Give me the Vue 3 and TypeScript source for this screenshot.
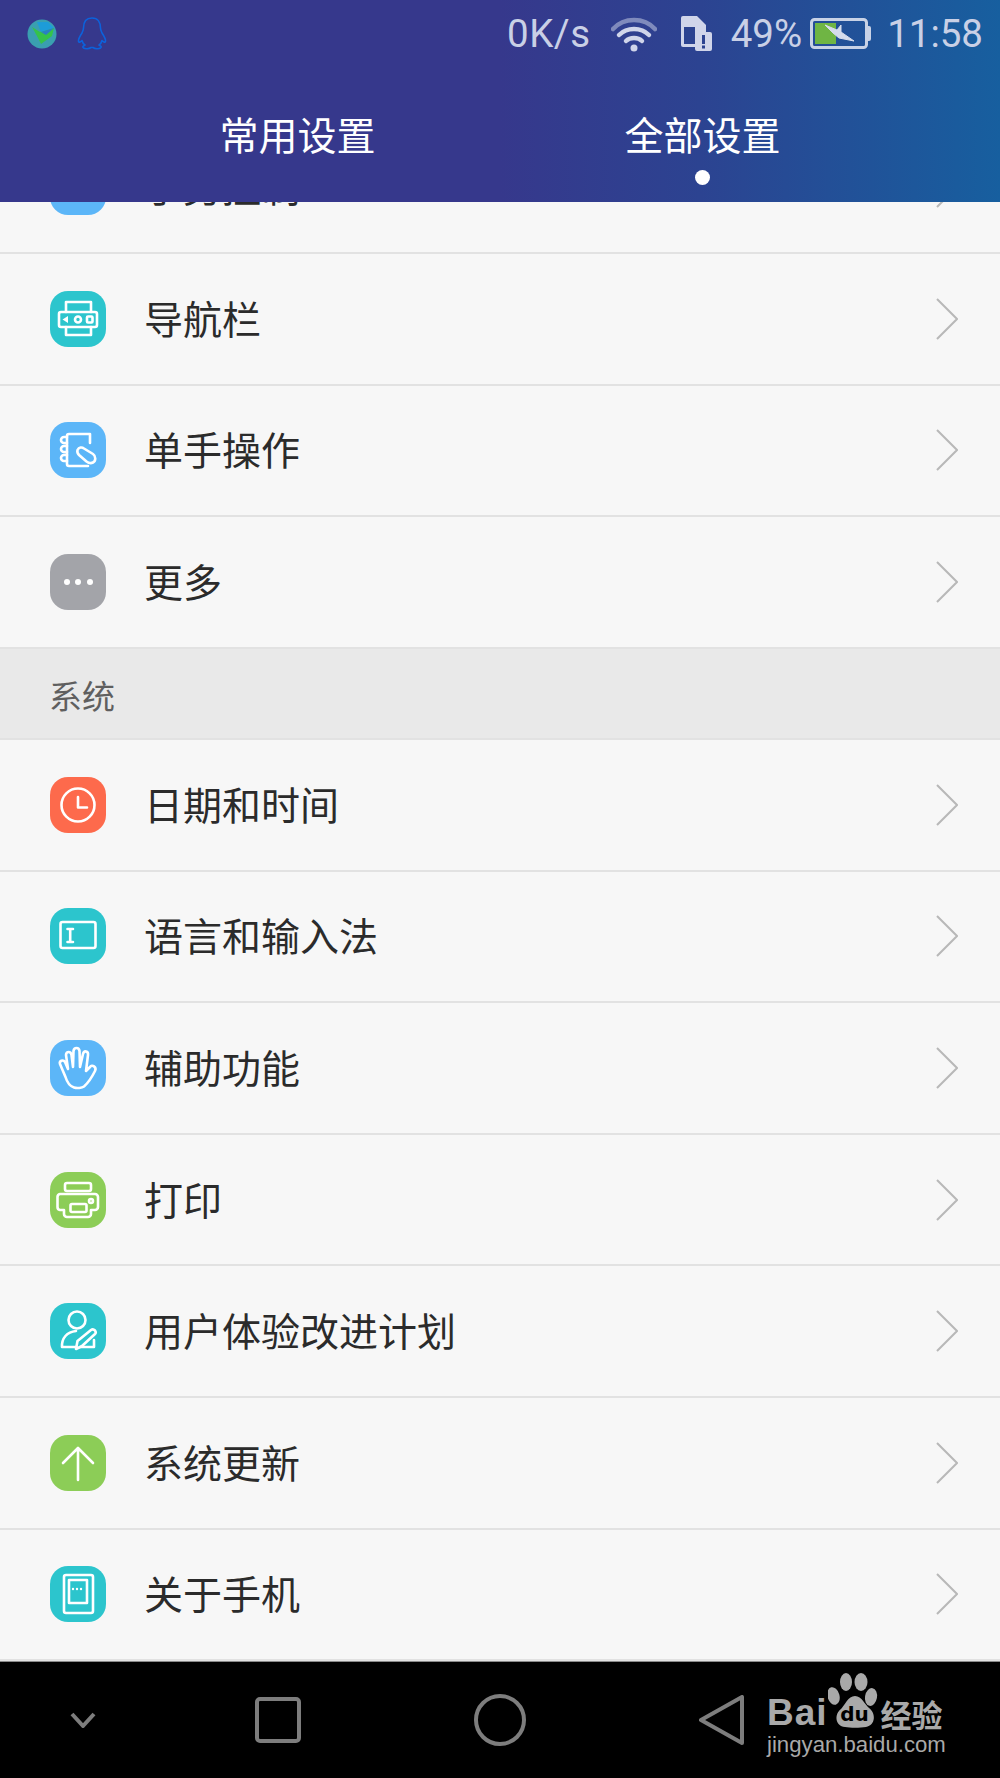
<template>
  <div class="page">
    <header class="top">
      <div class="status">
        <div class="status-left">
          <svg class="globe" width="30" height="30" viewBox="0 0 30 30">
            <circle cx="15" cy="15" r="14.5" fill="#3a9fb0" />
            <path d="M5 8 L13 13 L27 9 L25 17 L14 25 L10 17 Z" fill="#35c24a" />
            <path d="M10 3 L21 3 L27 9 L14 13 Z" fill="#1d9cd8" />
            <path d="M14 13 L27 9 L19 16 Z" fill="#2a7fc4" />
          </svg>
          <svg class="qq" width="30" height="33" viewBox="0 0 30 33" fill="none" stroke="#0c62dc" stroke-width="1.6" stroke-linejoin="round">
            <path d="M15 1 C9 1 6.500 5.500 6.500 11 C6.500 13 6 14 5 16 C3 19 1 22.500 1.500 24.500 C2 26 4 24.500 5 23.500 C5.500 25.500 6.500 27 8 28 C6 29 5 30 6.500 31 C8 32 12 32 14 30.500 C14.500 30.500 15.500 30.500 16 30.500 C18 32 22 32 23.500 31 C25 30 24 29 22 28 C23.500 27 24.500 25.500 25 23.500 C26 24.500 28 26 28.500 24.500 C29 22.500 27 19 25 16 C24 14 23.500 13 23.500 11 C23.500 5.500 21 1 15 1 Z" />
          </svg>
        </div>
        <div class="status-right">
          <span class="speed">0K/s</span>
          <svg class="wifi" width="46" height="36" viewBox="0 0 46 36" fill="none" stroke="#d0d5ea" stroke-width="4.500" stroke-linecap="round">
            <path d="M2 13 C13 1 33 1 44 13" opacity="0.5" />
            <path d="M8 19 C16 11 30 11 38 19" />
            <path d="M15 25 C19 21 27 21 31 25" />
            <circle cx="23" cy="32" r="3.500" fill="#d0d5ea" stroke="none" />
          </svg>
          <svg class="sim" width="32" height="36" viewBox="0 0 32 36">
            <path d="M3 0 H17 L26 9 V31 H3 Q1 31 1 29 V2 Q1 0 3 0 Z" fill="#d0d5ea" />
            <rect x="4" y="11" width="11" height="17" fill="#2c4391" />
            <rect x="15" y="16" width="17" height="19" rx="2" fill="#d0d5ea" />
            <rect x="22" y="19" width="3" height="9" fill="#2c4391" />
            <rect x="22" y="29.500" width="3" height="3" fill="#2c4391" />
          </svg>
          <span class="pct">49%</span>
          <svg class="batt" width="61" height="31" viewBox="0 0 61 31">
            <rect x="1.500" y="1.500" width="55" height="28" rx="3" fill="none" stroke="#c8d2e6" stroke-width="3" />
            <rect x="5" y="5" width="21" height="21" fill="#6fb544" />
            <path d="M58 8 H59 Q61 8 61 10 V21 Q61 23 59 23 H58 Z" fill="#c8d2e6" />
            <path d="M15 7 L27 12 L31 7 L31 14 L44 23 L29 20 L23 15 Z" fill="#d5dcec" stroke="#d5dcec" stroke-width="1" stroke-linejoin="round" />
          </svg>
          <span class="clock">11:58</span>
        </div>
      </div>
      <nav class="tabs">
        <div class="tab">常用设置</div>
        <div class="tab is-active">全部设置</div>
      </nav>
    </header>

    <main class="list">
      <template v-for="item in items" :key="item.label">
        <div v-if="item.section" class="section">{{ item.label }}</div>
        <div v-else class="row" :class="{ 'is-scrolled': item.scrolled }">
          <span class="ico" :style="{ background: item.color }">
            <svg
              width="56"
              height="56"
              viewBox="0 0 56 56"
              fill="none"
              stroke="#fff"
              stroke-width="2.600"
              stroke-linecap="round"
              stroke-linejoin="round"
              v-html="item.icon"
            ></svg>
          </span>
          <span class="label">{{ item.label }}</span>
          <svg class="chevron" width="22" height="42" viewBox="0 0 22 42" fill="none" stroke="#b8b8b8" stroke-width="2">
            <path d="M1 1 L21 21 L1 41" />
          </svg>
        </div>
      </template>
    </main>

    <footer class="nav">
      <svg class="nav-ico" width="26" height="16" viewBox="0 0 26 16" fill="none" stroke="#7d7d7d" stroke-width="4" stroke-linejoin="round">
        <path d="M2 2 L13 14 L24 2" />
      </svg>
      <svg class="nav-ico" width="46" height="46" viewBox="0 0 46 46" fill="none" stroke="#7d7d7d" stroke-width="4">
        <rect x="2" y="2" width="42" height="42" rx="3" />
      </svg>
      <svg class="nav-ico" width="52" height="52" viewBox="0 0 52 52" fill="none" stroke="#7d7d7d" stroke-width="4">
        <circle cx="26" cy="26" r="24" />
      </svg>
      <svg class="nav-ico" width="46" height="50" viewBox="0 0 46 50" fill="none" stroke="#7d7d7d" stroke-width="4" stroke-linejoin="round">
        <path d="M43 2 V48 L2 25 Z" />
      </svg>

      <div class="mark">
        <div class="mark-top">
          <span class="mark-bai">Bai</span>
          <svg class="paw" width="55" height="60" viewBox="70 5 55 60">
            <ellipse cx="88" cy="17" rx="6" ry="9" fill="#a9a9a9" />
            <ellipse cx="103" cy="17" rx="6.500" ry="9" fill="#a9a9a9" />
            <ellipse cx="75.500" cy="31" rx="6" ry="9" fill="#a9a9a9" transform="rotate(-15 75.500 31)" />
            <ellipse cx="113" cy="32" rx="6" ry="9" fill="#a9a9a9" transform="rotate(10 113 32)" />
            <path d="M97 31 C90 31 87 40 83 44 C76 49 77 61 87 62 C92 63 102 63 108 62 C118 60 118 48 111 43 C107 40 104 31 97 31 Z" fill="#a9a9a9" />
            <text class="paw-du" x="96.500" y="56">du</text>
          </svg>
          <span class="mark-cn">经验</span>
        </div>
        <div class="mark-url">jingyan.baidu.com</div>
      </div>
    </footer>
  </div>
</template>

<script setup lang="ts">
interface Item {
  label: string
  color?: string
  icon?: string
  section?: boolean
  scrolled?: boolean
}

const TEAL = '#2cc5cd'
const BLUE = '#5cb6f8'
const GREEN = '#8ccd57'

const items: Item[] = [
  {
    label: '手势控制',
    color: BLUE,
    scrolled: true,
    icon: '<circle cx="28" cy="26" r="6" fill="#fff" stroke="none"/>'
  },
  {
    label: '导航栏',
    color: TEAL,
    icon:
      '<path d="M16 21 V11 H41 V21 M16 36 V44 H41 V36"/><rect x="9" y="21" width="38" height="15" rx="2"/>' +
      '<path d="M18 25 V32 L12.500 28.500 Z" fill="#fff" stroke="none"/><circle cx="28" cy="28.500" r="3"/><rect x="37" y="25.500" width="5.500" height="6" rx="1"/>'
  },
  {
    label: '单手操作',
    color: BLUE,
    icon:
      '<path d="M40 21 V12 H19 Q17 12 17 14 V42 Q17 44 19 44 H38"/>' +
      '<path d="M17 15 H14 A3 3 0 0 0 14 21 H17 M17 24 H14 A3 3 0 0 0 14 30 H17 M17 33 H14 A3 3 0 0 0 14 39 H17"/>' +
      '<path d="M27.500 28 C29 25 32 25 34 26.500 L43 32 C46 34 46 39 43 40.500 C41 41.500 38.500 41 36.500 39.500 L29 33 C27.500 31.500 27 30 27.500 28 Z"/>'
  },
  {
    label: '更多',
    color: '#a3a4a9',
    icon:
      '<circle cx="17" cy="28" r="3" fill="#fff" stroke="none"/><circle cx="28" cy="28" r="3" fill="#fff" stroke="none"/><circle cx="40" cy="28" r="3" fill="#fff" stroke="none"/>'
  },
  { label: '系统', section: true },
  {
    label: '日期和时间',
    color: '#fd6a4c',
    icon: '<circle cx="28" cy="28" r="16.500"/><path d="M28 20 V30.500 H37"/>'
  },
  {
    label: '语言和输入法',
    color: TEAL,
    icon: '<rect x="10.500" y="14" width="35" height="26" rx="2"/><path d="M17.500 21 H23 M20.200 21 V34 M17.500 34 H23"/>'
  },
  {
    label: '辅助功能',
    color: BLUE,
    icon:
      '<path d="M24 47.500 C19 46 17 42 15.500 37 L10 24 C9 21 13 19 15 22 L18 29 L16 15 C16 11 21 11 21.500 15 L23 27 L23.500 11 C24 7 29 7 29.500 11 L30 27 L33 14 C34 10 38.500 11 38 15 L36 31 L40 27 C42 24 47 27 45 31 C42 37 38 43 34 46.500 C32 48 27 48.500 24 47.500 Z"/>'
  },
  {
    label: '打印',
    color: GREEN,
    icon:
      '<rect x="15" y="11" width="26" height="8" rx="2"/>' +
      '<path d="M14 38 H10 A3 3 0 0 1 7.500 35 V25 A3 3 0 0 1 10 22 H45 A3 3 0 0 1 48 25 V35 A3 3 0 0 1 45 38 H41 V42 A3 3 0 0 1 38 45 H17 A3 3 0 0 1 14 42 Z"/>' +
      '<rect x="20.500" y="32" width="16" height="8" rx="1.500"/><circle cx="41" cy="29" r="2"/>'
  },
  {
    label: '用户体验改进计划',
    color: TEAL,
    icon:
      '<circle cx="27" cy="17" r="8.500"/>' +
      '<path d="M12 44 C11.500 35 17 29 26 28 M12 44 H44 M44 44 L44 37"/>' +
      '<path d="M26 46 L27.500 38 L41 27 Q43 25.500 45 27.500 Q46.500 29.500 45 31 L32 43 Z" fill="#2cc5cd"/>'
  },
  {
    label: '系统更新',
    color: GREEN,
    icon: '<path d="M13 28 L28 13 L43 28 M28 13 V45"/>'
  },
  {
    label: '关于手机',
    color: TEAL,
    icon:
      '<rect x="14" y="9" width="29" height="38" rx="2"/><rect x="19" y="14" width="18" height="23"/>' +
      '<circle cx="23" cy="23" r="1.200" fill="#fff" stroke="none"/><circle cx="27" cy="23" r="1.200" fill="#fff" stroke="none"/><circle cx="31" cy="23" r="1.200" fill="#fff" stroke="none"/>'
  }
]
</script>

<style>
html,
body {
  margin: 0;
  background: #f7f7f7;
}
</style>

<style scoped>
.page {
  display: flex;
  flex-direction: column;
  width: 1000px;
  height: 1778px;
  overflow: hidden;
  background: #f7f7f7;
  font-family: 'Noto Sans CJK SC', 'Noto Sans', sans-serif;
}

.top {
  flex: 0 0 202px;
  position: relative;
  z-index: 1;
  background: linear-gradient(to right, #36388c 0%, #36388c 50%, #2c4391 70%, #175f9f 100%);
}

.status {
  display: flex;
  justify-content: space-between;
  align-items: center;
  height: 67px;
  padding: 0 17px 0 27px;
  font-family: Roboto, sans-serif;
  font-size: 38.5px;
  color: #c9d0e6;
}

.status-left,
.status-right {
  display: flex;
  align-items: center;
}

.qq {
  margin-left: 20px;
}

.speed {
  letter-spacing: 0.5px;
}

.wifi {
  margin-left: 20px;
}

.sim {
  margin-left: 23px;
}

.pct {
  margin-left: 19px;
}

.batt {
  margin-left: 8px;
}

.clock {
  margin-left: 16px;
}

.tabs {
  display: flex;
  justify-content: center;
}

.tab {
  position: relative;
  width: 405px;
  height: 135px;
  padding-top: 38px;
  box-sizing: border-box;
  text-align: center;
  font-size: 39px;
  line-height: 56px;
  color: #fff;
}

.tab.is-active::after {
  content: '';
  position: absolute;
  left: 50%;
  top: 103px;
  width: 15px;
  height: 15px;
  margin-left: -7.5px;
  border-radius: 50%;
  background: #fff;
}

.list {
  flex: 1;
  min-height: 0;
  overflow: hidden;
}

.row {
  display: flex;
  align-items: center;
  height: 131.6px;
  padding: 0 42px 0 50px;
  box-sizing: border-box;
  border-bottom: 2px solid #e2e2e2;
}

.row.is-scrolled {
  margin-top: -79.6px;
}

.ico {
  flex: 0 0 56px;
  width: 56px;
  height: 56px;
  border-radius: 18px;
}

.ico svg {
  display: block;
}

.label {
  flex: 1;
  margin-left: 38px;
  padding-bottom: 4px;
  font-size: 39px;
  color: #2b2b2b;
}

.section {
  display: flex;
  align-items: center;
  height: 91.2px;
  padding: 3px 49px 0;
  box-sizing: border-box;
  border-bottom: 2px solid #e2e2e2;
  background: #e9e9e9;
  font-size: 33px;
  color: #5f5f5f;
}

.nav {
  flex: 0 0 116.8px;
  position: relative;
  display: grid;
  grid-template-columns: 166px 224px 220px 224px 1fr;
  align-items: center;
  justify-items: center;
  background: #000;
  border-top: 1px solid #8a8a8a;
  box-sizing: border-box;
}

.mark {
  position: absolute;
  left: 767px;
  top: 8px;
  color: #a9a9a9;
}

.mark-top {
  display: flex;
  align-items: flex-end;
  height: 60px;
}

.mark-bai {
  font-family: 'Liberation Sans', sans-serif;
  font-weight: 700;
  font-size: 37px;
  line-height: 35px;
  letter-spacing: 1px;
}

.mark-cn {
  margin: 0 0 2px -2px;
  font-weight: 700;
  font-size: 31px;
  line-height: 29px;
}

.paw-du {
  font-family: 'DejaVu Sans', sans-serif;
  font-weight: 700;
  font-size: 20px;
  text-anchor: middle;
  fill: #000;
}

.mark-url {
  margin-top: 3px;
  font-family: 'Liberation Sans', sans-serif;
  font-size: 22.2px;
  line-height: 24px;
  white-space: nowrap;
}
</style>
